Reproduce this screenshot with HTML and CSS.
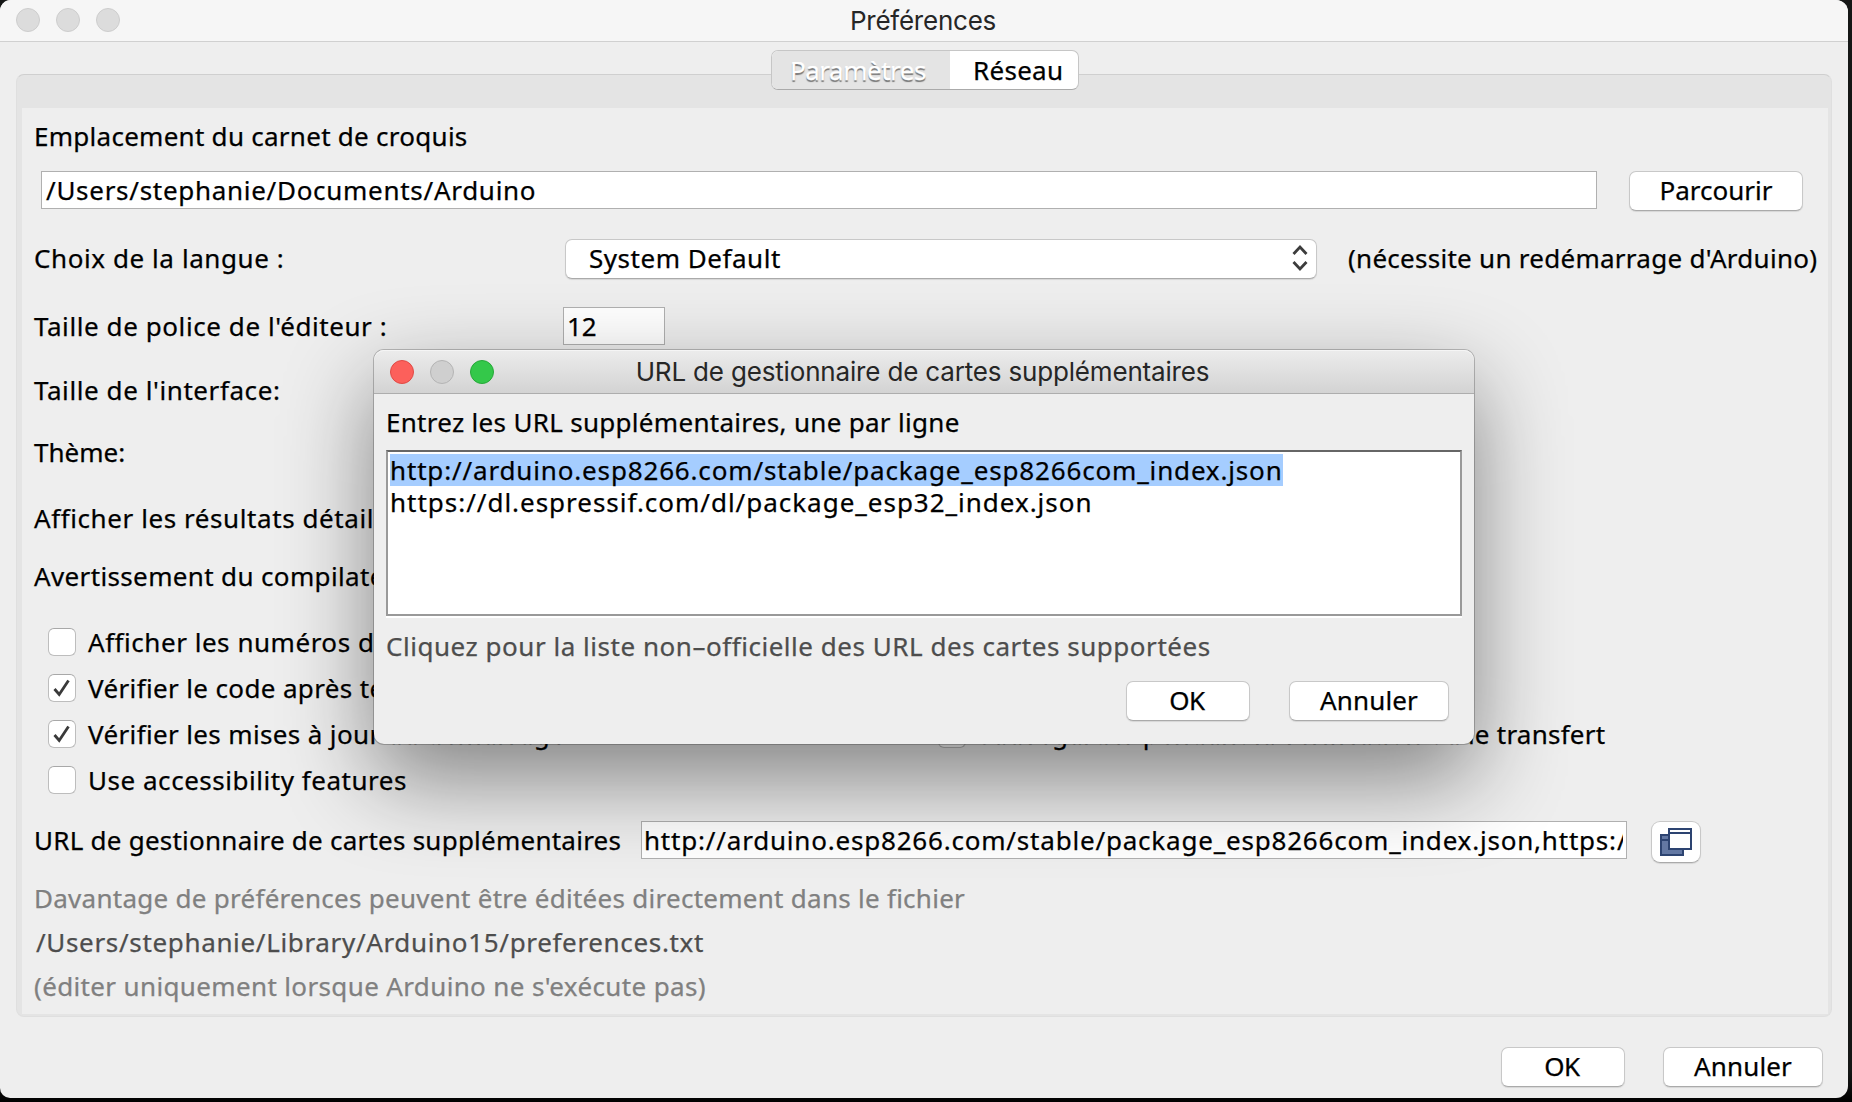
FILE: index.html
```
<!DOCTYPE html>
<html lang="fr">
<head>
<meta charset="utf-8">
<title>Préférences</title>
<link rel="stylesheet" href="styles.css">
</head>
<body>
<main class="window">
  <header class="titlebar">
    <div class="lights"><i></i><i></i><i></i></div>
    <h1>Préférences</h1>
  </header>

  <section class="tabpane">
    <nav class="tabs">
      <span class="tab active">Paramètres</span>
      <span class="tab">Réseau</span>
    </nav>
    <div class="panel">
      <div class="row"><span class="label tr-27">Emplacement du carnet de croquis</span></div>
      <div class="row path-row">
        <div class="field path tr-71">/Users/stephanie/Documents/Arduino</div>
        <button class="btn browse">Parcourir</button>
      </div>
      <div class="row">
        <span class="label col tr-58">Choix de la langue :</span>
        <div class="select tr-53">System Default
          <svg width="18" height="28" viewBox="0 0 18 28"><path d="M2.500 10 9 3l6.500 7M2.500 18 9 25l6.500-7" fill="none" stroke="#3c3c3c" stroke-width="2.800"/></svg>
        </div>
        <span class="note tr-27">(nécessite un redémarrage d'Arduino)</span>
      </div>
      <div class="row">
        <span class="label col tr-58">Taille de police de l'éditeur :</span>
        <div class="field size">12</div>
      </div>
      <div class="row"><span class="label tr-58">Taille de l'interface:</span></div>
      <div class="row"><span class="label">Thème:</span></div>
      <div class="row"><span class="label tr-58">Afficher les résultats détaillés</span></div>
      <div class="row"><span class="label tr-36">Avertissement du compilateur</span></div>
      <div class="checks">
        <div class="check"><b class="box"></b><span class="tr-53">Afficher les numéros de ligne</span></div>
        <div class="check"></div>
        <div class="check"><b class="box on"><svg width="18" height="18" viewBox="0 0 18 18"><path d="M1.500 10 6.200 15.500 15.500 1.500" fill="none" stroke="#3a3a3a" stroke-width="2.800"/></svg></b><span class="tr-36">Vérifier le code après téléversement</span></div>
        <div class="check"></div>
        <div class="check"><b class="box on"><svg width="18" height="18" viewBox="0 0 18 18"><path d="M1.500 10 6.200 15.500 15.500 1.500" fill="none" stroke="#3a3a3a" stroke-width="2.800"/></svg></b><span class="tr-36">Vérifier les mises à jour au démarrage</span></div>
        <div class="check"><b class="box"></b><span class="tr-24">Sauvegarder pendant la vérification ou le transfert</span></div>
        <div class="check"><b class="box"></b><span class="tr-53">Use accessibility features</span></div>
      </div>
      <div class="row">
        <span class="label url-label tr-24">URL de gestionnaire de cartes supplémentaires</span>
        <div class="field urls tr-80"><span>http://arduino.esp8266.com/stable/package_esp8266com_index.json,https://dl.espressif.com/dl/package_esp32_index.json</span></div>
        <button class="btn icon-btn">
          <svg width="32" height="28" viewBox="0 0 32 28" fill="none" stroke="#2d4471" stroke-width="2">
            <path fill="#6378a3" d="M1 7h22v20H1zM1 12h9"/>
            <path fill="#fff" d="M9 1h22v20H9zM9 5h22"/>
          </svg>
        </button>
      </div>
      <div class="row"><span class="label muted tr-27">Davantage de préférences peuvent être éditées directement dans le fichier</span></div>
      <div class="row"><span class="label link file tr-66">/Users/stephanie/Library/Arduino15/preferences.txt</span></div>
      <div class="row"><span class="label muted tr-36">(éditer uniquement lorsque Arduino ne s'exécute pas)</span></div>
    </div>
  </section>

  <footer class="actions">
    <button class="btn ok">OK</button>
    <button class="btn cancel">Annuler</button>
  </footer>
</main>

<section class="dialog">
  <header class="dialog-title">
    <div class="lights"><i class="red"></i><i class="gray"></i><i class="green"></i></div>
    <h2>URL de gestionnaire de cartes supplémentaires</h2>
  </header>
  <div class="dialog-body">
    <p class="tr-30">Entrez les URL supplémentaires, une par ligne</p>
    <div class="textarea">
      <div class="tr-84"><mark>http://arduino.esp8266.com/stable/package_esp8266com_index.json</mark></div>
      <div class="tr-98">https://dl.espressif.com/dl/package_esp32_index.json</div>
    </div>
    <p class="link tr-53">Cliquez pour la liste non–officielle des URL des cartes supportées</p>
    <div class="dialog-actions">
      <button class="btn ok">OK</button>
      <button class="btn cancel">Annuler</button>
    </div>
  </div>
</section>
</body>
</html>
```
FILE: styles.css
```
* { box-sizing: border-box; }

body {
  margin: 0;
  width: 1852px;
  height: 1102px;
  overflow: hidden;
  position: relative;
  background: linear-gradient(#151716, #151716 1070px, #0a0a0a 1090px, #000);
  font: 26px/36px "Noto Sans", sans-serif;
  color: #000;
  white-space: nowrap;
  -webkit-text-stroke: .25px;
}

h1, h2, p { margin: 0; font-size: 26px; font-weight: 400; }
h1, h2 { font-family: Inter, sans-serif; color: #262626; text-align: center; -webkit-text-stroke: 0; }
svg { display: block; flex: none; }

/* letter spacing steps */
.tr-24 { letter-spacing: .24px; }
.tr-27 { letter-spacing: .27px; }
.tr-30 { letter-spacing: .3px; }
.tr-36 { letter-spacing: .36px; }
.tr-53 { letter-spacing: .53px; }
.tr-58 { letter-spacing: .58px; }
.tr-66 { letter-spacing: .66px; }
.tr-71 { letter-spacing: .71px; }
.tr-80 { letter-spacing: .8px; }
.tr-84 { letter-spacing: .84px; }
.tr-98 { letter-spacing: .98px; }

/* preferences window */
.window {
  width: 1848px;
  height: 1098px;
  border-radius: 11px 12px 12px 10px;
  background: #eee;
  overflow: hidden;
  display: flex;
  flex-direction: column;
}

.titlebar {
  height: 42px;
  flex: none;
  background: #f6f6f6;
  border-bottom: 1px solid #d0d0d0;
  display: grid;
  grid-template-columns: 124px 1fr 126px;
  align-items: center;
}
.titlebar h1 { letter-spacing: -.23px; }

.lights { display: flex; gap: 16px; padding-left: 16px; }
.titlebar .lights { padding-bottom: 1px; }
.lights i {
  width: 24px;
  height: 24px;
  border-radius: 50%;
  background: #dcdcdc;
  border: 1px solid #cdcdcd;
}
.lights .red { background: #fc605b; border-color: #e04a45; }
.lights .gray { background: #cfcfcf; border-color: #b4b4b4; }
.lights .green { background: #34c84a; border-color: #27a839; }

.tabpane {
  margin: 32px 16px 0;
  height: 943px;
  flex: none;
  border: 1px solid #dfdfdf;
  border-top-color: #cfcfcf;
  border-radius: 8px;
  background: #e4e4e4;
  padding: 0 3px 3px 5px;
}

.tabs {
  display: flex;
  width: 308px;
  height: 40px;
  margin: -25px 0 18px 749px;
  border-radius: 7px;
  overflow: hidden;
  background: #fff;
  border: 1px solid #c6c6c6;
  border-bottom-color: #aaa;
}
.tab { flex: 1; line-height: 38px; padding-left: 23px; letter-spacing: .29px; }
.tab.active {
  flex: none;
  width: 178px;
  padding-left: 18px;
  background: #e4e4e4;
  color: #fff;
  letter-spacing: -.48px;
  text-shadow: 0 1.500px 1px #777;
}

.panel {
  height: 906px;
  background: #eee;
  display: grid;
  grid-template-rows: 56px 52px 84px 52px 76px 48px 84px 32px 211px 74px 42px 45px 44px;
}
.row { display: flex; align-items: center; padding-left: 12px; }
.col { width: 529px; }
.file { padding-left: 2px; }

.field {
  height: 38px;
  background: #fff;
  border: 1px solid #b0b0b0;
  line-height: 36px;
  padding: 0 4px;
  overflow: hidden;
}
.path-row { padding-left: 19px; }
.path { width: 1556px; }
.size { width: 102px; padding-left: 3px; }
.urls { width: 986px; padding: 0 3px 0 2px; }
.urls span { display: block; overflow: hidden; }

.btn {
  font: inherit;
  height: 40px;
  padding: 0 0 2px;
  background: #fff;
  border: 1px solid #c8c8c8;
  border-bottom-color: #aaa;
  border-radius: 7px;
  box-shadow: 0 1px 1px rgba(0, 0, 0, .1);
  line-height: 36px;
  color: #000;
}
.browse { width: 174px; margin: 2px 0 0 32px; }
.ok { width: 124px; letter-spacing: -.4px; padding-right: 2px; }
.cancel { width: 160px; letter-spacing: .13px; }
.icon-btn {
  width: 50px;
  height: 42px;
  margin: 4px 0 0 24px;
  padding: 0 1px 0 0;
  border-radius: 9px;
  display: flex;
  align-items: center;
  justify-content: center;
}

.select {
  width: 752px;
  height: 40px;
  margin: 2px 31px 0 2px;
  padding: 0 7px 2px 23px;
  background: #fff;
  border: 1px solid #c8c8c8;
  border-bottom-color: #aaa;
  border-radius: 7px;
  box-shadow: 0 1px 1px rgba(0, 0, 0, .1);
  display: flex;
  justify-content: space-between;
  align-items: center;
  line-height: 36px;
}

.checks {
  padding: 27px 0 0 26px;
  display: grid;
  grid-template-columns: 890px 1fr;
  grid-template-rows: repeat(4, 46px);
}
.check { display: flex; align-items: center; gap: 12px; }
.box {
  width: 28px;
  height: 28px;
  background: #fff;
  border: 1px solid #bdbdbd;
  border-top-color: #a8a8a8;
  border-radius: 6px;
  display: grid;
  place-items: center;
}

.url-label { width: 607px; }
.muted { color: #808080; }
.link { color: #4d4d4d; }

.actions {
  display: flex;
  justify-content: flex-end;
  gap: 38px;
  padding: 30px 25px 0 0;
}

/* dialog floating over the preferences window */
.dialog {
  position: absolute;
  left: 374px;
  top: 350px;
  width: 1100px;
  height: 394px;
  border-radius: 10px;
  background: #eee;
  box-shadow: 0 0 0 1px rgba(0, 0, 0, .22), 0 34px 90px rgba(0, 0, 0, .46);
}
.dialog-title {
  height: 44px;
  border-radius: 10px 10px 0 0;
  background: linear-gradient(#ececec, #d3d3d3);
  border-bottom: 1px solid #adadad;
  box-shadow: inset 0 1px #f5f5f5;
  display: grid;
  grid-template-columns: 124px 1fr 127px;
  align-items: center;
}
.dialog-title h2 { letter-spacing: -.17px; padding-top: 1px; }
.dialog-body { padding: 10px 12px 0; }
.dialog-body p { height: 36px; }
.textarea {
  height: 166px;
  margin: 10px 0;
  padding: 2px;
  background: #fff;
  border: 2px solid #999;
  border-top-color: #666;
  box-shadow: 0 2px #fff;
  line-height: 32px;
}
.textarea div { height: 32px; }
mark { display: inline-block; height: 32px; background: #a5cdff; color: inherit; }
.dialog-body .link { margin-top: 12px; }
.dialog-actions {
  display: flex;
  justify-content: flex-end;
  gap: 39px;
  margin: 17px 13px 0 0;
}
```
